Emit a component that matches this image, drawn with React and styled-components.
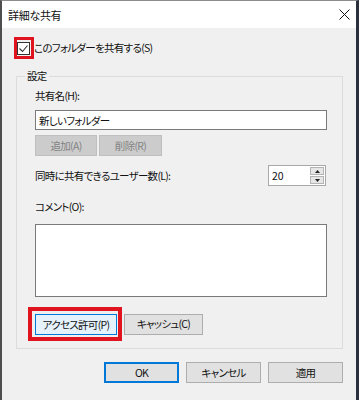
import React from 'react';
import styled, { createGlobalStyle } from 'styled-components';

const GlobalStyle = createGlobalStyle`
    html, body {
        margin: 0;
        padding: 0;
        background: #f0f0f0;
    }
    * {
        box-sizing: border-box;
    }
`

const uiFont = `font-family: 'Noto Sans CJK JP', 'Noto Sans', sans-serif;
    font-feature-settings: "palt" 1;
    font-size: 10.5px;
    font-weight: 400;
    letter-spacing: -0.7px;
    white-space: nowrap;
    color: #111111;`

export default function App() {
    return (
        <>
            <GlobalStyle />
            <Window>
                <TitleBar>
                    <Title>詳細な共有</Title>
                    <CloseIcon />
                </TitleBar>
                <Body>
                    <CheckRow>
                        <Highlight $pad="2px 1px 1px 0">
                            <CheckBox><CheckMark /></CheckBox>
                        </Highlight>
                        <Label>このフォルダーを共有する(S)</Label>
                    </CheckRow>
                    <GroupBox>
                        <GroupTitle>設定</GroupTitle>
                        <Label $top={4}>共有名(H):</Label>
                        <TextInput defaultValue="新しいフォルダー" />
                        <ButtonRow $top={5}>
                            <Button $variant="disabled" $width={62}>追加(A)</Button>
                            <Button $variant="disabled" $width={63}>削除(R)</Button>
                        </ButtonRow>
                        <SpinRow>
                            <Label>同時に共有できるユーザー数(L):</Label>
                            <Spinner />
                        </SpinRow>
                        <Label $top={13}>コメント(O):</Label>
                        <CommentBox />
                        <ButtonRow $top={10}>
                            <Highlight $pad="3px 1px 2px 3px" $thick={4} $shift={-7}>
                                <Button $variant="focus" $width={82}>アクセス許可(P)</Button>
                            </Highlight>
                            <Button $width={79}>キャッシュ(C)</Button>
                        </ButtonRow>
                    </GroupBox>
                    <Footer>
                        <Button $variant="default" $width={75}>OK</Button>
                        <Button $width={75}>キャンセル</Button>
                        <Button $width={75}>適用</Button>
                    </Footer>
                </Body>
            </Window>
        </>
    );
}

function CloseIcon() {
    return (
        <svg width="11" height="11" viewBox="0 0 11 11">
            <path d="M0.5 0.5 L10.5 10.5 M10.5 0.5 L0.5 10.5" stroke="#111" strokeWidth="1" />
        </svg>
    );
}

function CheckMark() {
    return (
        <svg width="11" height="11" viewBox="0 0 11 11">
            <path d="M1.5 5.5 L4.5 8.5 L9.5 2.5" fill="none" stroke="#333" strokeWidth="1.1" />
        </svg>
    );
}

function Spinner() {
    return (
        <SpinBox>
            <SpinValue>20</SpinValue>
            <SpinButtons>
                <SpinArrow>
                    <svg width="5" height="3" viewBox="0 0 5 3"><path d="M0 3 L2.5 0 L5 3 Z" fill="#222" /></svg>
                </SpinArrow>
                <SpinArrow>
                    <svg width="5" height="3" viewBox="0 0 5 3"><path d="M0 0 L2.5 3 L5 0 Z" fill="#222" /></svg>
                </SpinArrow>
            </SpinButtons>
        </SpinBox>
    );
}

const Window = styled.div`
    display: flex;
    flex-direction: column;
    width: 359px;
    height: 400px;
    overflow: hidden;
    background: #f0f0f0;
    border-left: 2px solid #4e4e4e;
    border-right: 3px solid #2c2f3d;
    border-top: 1px solid #8c8c8c;
`

const TitleBar = styled.div`
    display: flex;
    align-items: center;
    justify-content: space-between;
    height: 27px;
    padding: 0 6px 0 6px;
    background: #ffffff;
`

const Title = styled.span`
    ${uiFont}
    font-size: 11px;
    letter-spacing: -0.3px;
    line-height: 16px;
`

const Body = styled.div`
    display: flex;
    flex-direction: column;
    padding: 9px 13px 0 14px;
`

const CheckRow = styled.div`
    display: flex;
    align-items: center;
    margin-left: -2px;
`

const Highlight = styled.div`
    display: inline-flex;
    align-items: center;
    border: ${p => p.$thick || 3}px solid #e0141e;
    padding: ${p => p.$pad};
    margin-left: ${p => p.$shift || 0}px;
`

const CheckBox = styled.div`
    display: flex;
    align-items: center;
    justify-content: center;
    width: 13px;
    height: 13px;
    background: #ffffff;
    border: 1px solid #333333;
`

const Label = styled.div`
    ${uiFont}
    line-height: 16px;
    margin-top: ${p => p.$top || 0}px;
`

const GroupBox = styled.div`
    display: flex;
    flex-direction: column;
    margin-top: 17px;
    border: 1px solid #dcdcdc;
    padding: 0 15px 7px 18px;
`

const GroupTitle = styled.div`
    ${uiFont}
    align-self: flex-start;
    line-height: 16px;
    margin: -9px 0 0 -10px;
    padding: 0 2px;
    background: #f0f0f0;
`

const TextInput = styled.input`
    ${uiFont}
    width: 100%;
    height: 20px;
    margin-top: 6px;
    padding: 0 3px;
    border: 1px solid #7a7a7a;
    background: #ffffff;
    outline: none;
`

const ButtonRow = styled.div`
    display: flex;
    align-items: center;
    gap: 2px;
    margin-top: ${p => p.$top || 0}px;
`

const buttonLook = {
    normal: 'background: #e1e1e1; border: 1px solid #adadad; color: #111111;',
    disabled: 'background: #cccccc; border: 1px solid #bfbfbf; color: #838383;',
    focus: 'background: #e5f1fb; border: 1px solid #0078d7; color: #111111;',
    default: 'background: #e1e1e1; border: 2px solid #0078d7; color: #111111;',
}

const Button = styled.button`
    ${uiFont}
    width: ${p => p.$width}px;
    height: 21px;
    padding: 0;
    line-height: 16px;
    ${p => buttonLook[p.$variant || 'normal']}
`

const SpinRow = styled.div`
    display: flex;
    align-items: center;
    justify-content: space-between;
    margin-top: 9px;
`

const SpinBox = styled.div`
    display: flex;
    width: 58px;
    height: 21px;
    margin-right: 1px;
    border: 1px solid #a8a8a8;
    background: #ffffff;
`

const SpinValue = styled.div`
    ${uiFont}
    flex: 1;
    line-height: 19px;
    padding-left: 3px;
    letter-spacing: 0;
`

const SpinButtons = styled.div`
    display: flex;
    flex-direction: column;
    justify-content: center;
    gap: 1px;
    padding: 1px 1px 1px 0;
`

const SpinArrow = styled.div`
    display: flex;
    align-items: center;
    justify-content: center;
    width: 14px;
    height: 8px;
    background: #e6e6e6;
    border: 1px solid #b4b4b4;
`

const CommentBox = styled.div`
    height: 73px;
    margin-top: 9px;
    border: 1px solid #7a7a7a;
    background: #ffffff;
`

const Footer = styled.div`
    display: flex;
    justify-content: flex-end;
    gap: 7px;
    margin-top: 13px;
`
